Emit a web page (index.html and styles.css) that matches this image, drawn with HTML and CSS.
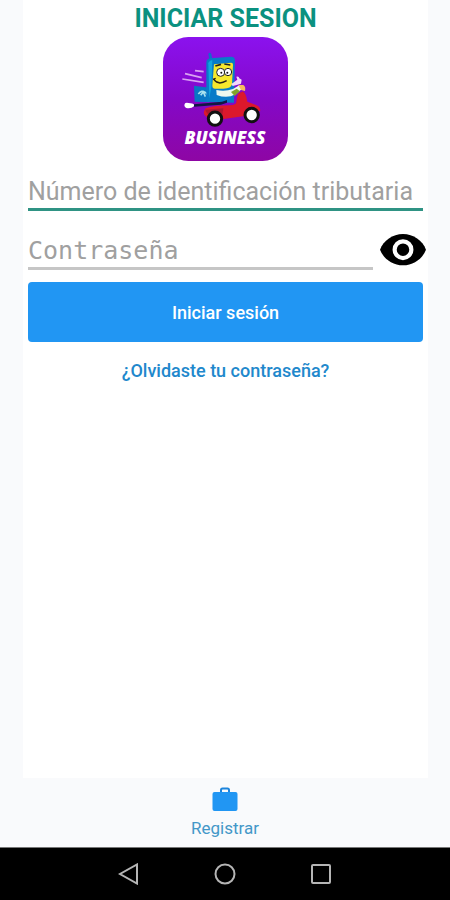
FILE: index.html
```html
<!DOCTYPE html>
<html lang="es">
<head>
  <meta charset="UTF-8">
  <meta name="viewport" content="width=device-width, initial-scale=1.0">
  <title>Iniciar sesión</title>
  <link rel="stylesheet" href="styles.css">
</head>
<body>
<main class="card">
  <h1 class="title">INICIAR SESION</h1>
  <svg class="logo" viewBox="24 21 375 372" role="img" aria-label="Business">
    <defs>
      <linearGradient id="purple" x1="0" y1="0" x2="0" y2="1">
        <stop offset="0" stop-color="#8b12ee"/>
        <stop offset="0.5" stop-color="#8408c8"/>
        <stop offset="1" stop-color="#8e06a4"/>
      </linearGradient>
    </defs>
    <rect x="24" y="21" width="375" height="372" rx="76" fill="url(#purple)"/>
    <!-- speed lines -->
    <path d="M120 122l26 3M90 131l50 12M82 147l64 10" stroke="#d9a4f2" stroke-width="5" fill="none"/>
    <!-- box -->
    <path d="M117 167l46 6v44l-44-2z" fill="#0877c4"/>
    <path d="M130 192q10-14 22-4t8 8M137 196l8-10 6 14" stroke="#a8e2ef" stroke-width="5" fill="none"/>
    <!-- phone -->
    <path d="M163 88l-3-16q4-7 9 0l3 16z" fill="#1468cc"/>
    <path d="M154 98q0-12 12-13l62-5q12 0 12 12l-3 126-75-2q-8 0-8-10z" fill="#087bc8"/>
    <path d="M160 100q2-8 12-9l-3 80-6 34z" fill="#13a5de"/>
    <path d="M177 103l52-5q5 0 5 6l-3 58q-2 14-26 14h-25q-8 0-8-9z" fill="#f5e82d"/>
    <path d="M181 108l17-5M208 102l18 3" stroke="#222" stroke-width="5"/>
    <circle cx="197" cy="127" r="12" fill="#fff" stroke="#222" stroke-width="3"/>
    <circle cx="219" cy="126" r="11" fill="#fff" stroke="#222" stroke-width="3"/>
    <circle cx="199" cy="128" r="3" fill="#111"/>
    <circle cx="217" cy="128" r="3" fill="#111"/>
    <path d="M177 149q13 18 38 3M174 148l8-3" stroke="#252013" stroke-width="4" fill="none"/>
    <path d="M184 180q27 5 50-3l20-12 12 8-25 20q-24 14-56 2z" fill="#edf8ef"/>
    <path d="M228 186l17-10 10 8-16 14z" fill="#83a329"/>
    <path d="M229 162l18-13-3-9q8-2 9 5l7 4-2 12-13 4-12 3z" fill="#f2d8fa"/>
    <!-- scooter -->
    <path d="M89 222q2-7 17-2 12 0 12 8-10 9-24 6-8-4-5-12z" fill="#fff"/>
    <path d="M152 235q23-9 72-9 22-1 20-13l5-22 15-7q9 6 13 31l24 9q15 4 15 18l-47 16-63 9-50-5q-17-9-4-27z" fill="#dc182c"/>
    <path d="M117 223l84-8 15-5v8l-18 6-81 6z" fill="#111744"/>
    <path d="M166 257q-13-7-15-18l54-4-3 22z" fill="#ad182f"/>
    <path d="M250 165h15q8 5 5 18l-12-3z" fill="#f6bd5f"/>
    <circle cx="180" cy="266" r="20" fill="#fff" stroke="#111" stroke-width="9"/>
    <circle cx="290" cy="255" r="20" fill="#fff" stroke="#111" stroke-width="9"/>
    <text class="logo-text" x="210" y="342" text-anchor="middle">BUSINESS</text>
  </svg>
  <form class="form">
    <input class="field nit" type="text" placeholder="Número de identificación tributaria" aria-label="Número de identificación tributaria">
    <div class="password-row">
      <input class="field password" type="password" placeholder="Contraseña" aria-label="Contraseña">
      <button class="eye" type="button" aria-label="Mostrar contraseña">
        <svg viewBox="1 4.5 22 15">
          <path d="M12 4.5C7 4.5 2.7 7.6 1 12c1.7 4.4 6 7.5 11 7.500s9.300-3.100 11-7.500c-1.700-4.400-6-7.500-11-7.500z"/>
          <circle cx="12" cy="12" r="4" fill="none" stroke="#fff" stroke-width="2"/>
        </svg>
      </button>
    </div>
    <button class="btn" type="button">Iniciar sesión</button>
  </form>
  <a class="forgot" href="#">¿Olvidaste tu contraseña?</a>
</main>
<a class="register" href="#">
  <svg viewBox="0 0 26 24">
    <path d="M9 6V3q0-1.500 1.500-1.500h5Q17 1.500 17 3v3" fill="none" stroke="#1c84dc" stroke-width="2"/>
    <rect x="0.500" y="5" width="25" height="19" rx="2" fill="#2196f3"/>
  </svg>
  <span>Registrar</span>
</a>
<nav class="android-bar">
  <button type="button" aria-label="Atrás">
    <svg viewBox="0 0 22 22"><path d="M19 1.500v19L2 11z"/></svg>
  </button>
  <button type="button" aria-label="Inicio">
    <svg viewBox="0 0 22 22"><circle cx="11" cy="11" r="9.500"/></svg>
  </button>
  <button type="button" aria-label="Recientes">
    <svg viewBox="0 0 22 22"><rect x="2" y="2" width="18" height="18" rx="1"/></svg>
  </button>
</nav>
</body>
</html>
```
FILE: styles.css
```css
* {
  box-sizing: border-box;
}

body {
  margin: 0;
  min-height: 100vh;
  display: flex;
  flex-direction: column;
  background-color: #f9fafc;
  font-family: Roboto, "Liberation Sans", sans-serif;
}

button {
  padding: 0;
  border: none;
  background: none;
  cursor: pointer;
}

.card {
  flex: 1;
  display: flex;
  flex-direction: column;
  align-items: center;
  margin: 0 22px 0 23px;
  padding: 0 5px;
  background-color: #fff;
}

.title {
  margin: 0;
  font-size: 25px;
  line-height: 37px;
  font-weight: 700;
  color: #0b9180;
}

.logo {
  width: 125px;
  height: 124px;
}

.logo-text {
  font-family: "Open Sans", sans-serif;
  font-size: 52px;
  font-weight: 800;
  font-style: italic;
  fill: #fff;
}

.form {
  width: 100%;
  margin-top: 10px;
}

.field {
  display: block;
  width: 100%;
  height: 40px;
  padding: 3px 0 0;
  border: none;
  border-bottom: 3px solid #c6c6c6;
  border-radius: 0;
  background: none;
  outline: none;
  color: #333;
  font-family: Roboto, sans-serif;
  font-size: 25px;
}

.field::placeholder {
  color: #a0a0a0;
  opacity: 1;
}

.nit {
  border-bottom-color: #2f9384;
}

.password-row {
  display: flex;
  align-items: center;
  gap: 7px;
  margin: 19px -3px 0 0;
}

.password {
  flex: 1;
  min-width: 0;
  font-family: "DejaVu Sans Mono", monospace;
}

.eye {
  width: 46px;
}

.eye svg {
  display: block;
  width: 100%;
}

.btn {
  display: block;
  width: 100%;
  height: 60px;
  margin-top: 12px;
  border-radius: 4px;
  background-color: #2196f3;
  color: #fff;
  font-family: Roboto, sans-serif;
  font-size: 18px;
  font-weight: 500;
}

.forgot {
  margin-top: 17px;
  font-size: 18px;
  line-height: 24px;
  font-weight: 500;
  color: #2188cc;
  text-decoration: none;
}

.register {
  display: flex;
  flex-direction: column;
  align-items: center;
  gap: 2px;
  padding: 9px 0 4px;
  color: #4397c8;
  font-size: 17px;
  line-height: 30px;
  text-decoration: none;
}

.register svg {
  width: 26px;
  height: 24px;
}

.android-bar {
  display: flex;
  justify-content: center;
  align-items: center;
  gap: 74px;
  height: 53px;
  border-top: 1px solid #777;
  background-color: #000;
}

.android-bar svg {
  display: block;
  width: 22px;
  height: 22px;
  fill: none;
  stroke: #b5b5b5;
  stroke-width: 2;
}
```
